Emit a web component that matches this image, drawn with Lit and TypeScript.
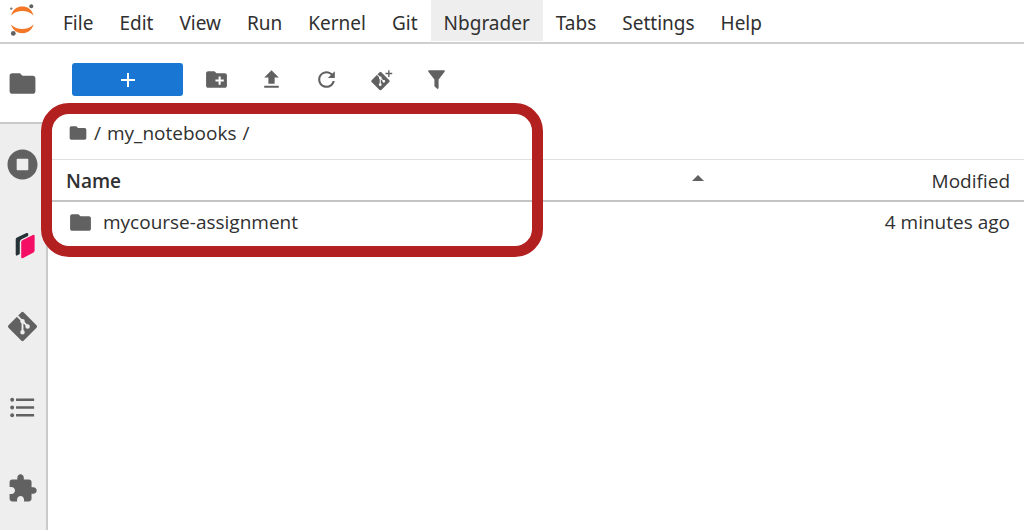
import { LitElement, html, svg, css } from "lit";
import { customElement, property } from "lit/decorators.js";

const FOLDER = svg`<path d="M10 4H4c-1.1 0-1.99.9-1.99 2L2 18c0 1.1.9 2 2 2h16c1.1 0 2-.9 2-2V8c0-1.1-.9-2-2-2h-8l-2-2z"/>`;

const ICONS: Record<string, { box: string; art: unknown }> = {
  folder: { box: "0 0 24 24", art: FOLDER },
  newFolder: {
    box: "0 0 24 24",
    art: svg`<path d="M20 6h-8l-2-2H4c-1.11 0-1.99.89-1.99 2L2 18c0 1.11.89 2 2 2h16c1.11 0 2-.89 2-2V8c0-1.11-.89-2-2-2zm-1 8h-3v3h-2v-3h-3v-2h3V9h2v3h3v2z"/>`,
  },
  add: { box: "0 0 24 24", art: svg`<path d="M19 13h-6v6h-2v-6H5v-2h6V5h2v6h6v2z"/>` },
  upload: { box: "0 0 24 24", art: svg`<path d="M5 20h14v-2H5v2zm0-3zM9 16h6v-6h4l-7-7-7 7h4z"/>` },
  refresh: {
    box: "0 0 18 18",
    art: svg`<path d="M9 13.5c-2.49 0-4.5-2.01-4.5-4.5S6.51 4.5 9 4.5c1.24 0 2.36.52 3.17 1.33L10 8h5V3l-1.76 1.76C12.15 3.68 10.66 3 9 3 5.69 3 3.01 5.69 3.01 9S5.69 15 9 15c2.97 0 5.43-2.16 5.9-5h-1.52c-.46 2-2.24 3.5-4.38 3.5z"/>`,
  },
  gitClone: {
    box: "0 0 24 24",
    art: svg`<rect x="4.4" y="6.9" width="13.2" height="13.2" rx="1.2" transform="rotate(45 11 13.5)"/>
      <g stroke="#fff" stroke-width="1" fill="#fff"><path fill="none" d="M7.8 7.2l3 3v7M10.8 10.5l3.4 3.2"/>
      <circle cx="10.8" cy="10.4" r="0.8"/><circle cx="10.8" cy="17" r="0.8"/><circle cx="14.2" cy="13.7" r="0.8"/></g>
      <path d="M18.4 3h1.3v2.6h2.6v1.3h-2.6v2.6h-1.3V6.9h-2.6V5.6h2.6z"/>`,
  },
  filter: {
    box: "0 0 24 24",
    art: svg`<path d="M14,12V19.88C14.04,20.18 13.94,20.5 13.71,20.71C13.32,21.1 12.69,21.1 12.3,20.71L10.29,18.7C10.06,18.47 9.96,18.16 10,17.87V12H9.97L4.21,4.62C3.87,4.19 3.95,3.56 4.38,3.22C4.57,3.08 4.78,3 5,3V3H19V3C19.22,3 19.43,3.08 19.62,3.22C20.05,3.56 20.13,4.19 19.79,4.62L14.03,12H14Z"/>`,
  },
  running: {
    box: "0 0 512 512",
    art: svg`<path d="M256 8C119 8 8 119 8 256s111 248 248 248 248-111 248-248S393 8 256 8zm96 328c0 8.8-7.2 16-16 16H176c-8.8 0-16-7.2-16-16V176c0-8.8 7.2-16 16-16h160c8.8 0 16 7.2 16 16v160z"/>`,
  },
  grader: {
    box: "0 0 31 31",
    art: svg`<path fill="#263238" d="M8.7 9.6Q8.7 8.3 10 7.6L19.5 3Q21.2 2.5 21.2 4V6L14.5 9.2Q12.8 10.2 12.8 12V24L10 25.6Q8.7 25.8 8.7 24.5z"/>
      <path fill="#f50f64" d="M14.2 12.2Q14.2 10.9 15.4 10.2L25.8 5Q27.6 4.4 27.6 6V20.6Q27.6 21.8 26.5 22.4L16.2 28Q14.2 28.9 14.2 27z"/>`,
  },
  git: {
    box: "0 0 31 31",
    art: svg`<rect x="4.7" y="4.7" width="21.6" height="21.6" rx="1.8" transform="rotate(45 15.5 15.5)"/>
      <g stroke="#eee" stroke-width="1.9" fill="#eee"><path fill="none" d="M10.2 4.8l5.3 5.4v11M15.5 10.2l5 5"/>
      <circle cx="15.5" cy="10.3" r="1.3"/><circle cx="15.5" cy="21.2" r="1.3"/><circle cx="20.6" cy="15.4" r="1.3"/></g>`,
  },
  toc: {
    box: "0 0 24 24",
    art: svg`<path d="M7 5h14v2H7zM7 11h14v2H7zM7 17h14v2H7z"/><circle cx="4" cy="6" r="1.5"/><circle cx="4" cy="12" r="1.5"/><circle cx="4" cy="18" r="1.5"/>`,
  },
  extension: {
    box: "0 0 24 24",
    art: svg`<path d="M20.5 11H19V7c0-1.1-.9-2-2-2h-4V3.5C13 2.12 11.88 1 10.5 1S8 2.12 8 3.5V5H4c-1.1 0-1.99.9-1.99 2v3.8H3.5c1.49 0 2.7 1.21 2.7 2.7s-1.21 2.7-2.7 2.7H2V20c0 1.1.9 2 2 2h3.8v-1.5c0-1.49 1.21-2.7 2.7-2.7 1.49 0 2.7 1.21 2.7 2.7V22H17c1.1 0 2-.9 2-2v-4h1.5c1.38 0 2.5-1.12 2.5-2.5S21.88 11 20.5 11z"/>`,
  },
  caretUp: { box: "0 0 14 7", art: svg`<path d="M0 7L7 0l7 7z"/>` },
  jupyter: {
    box: "0 0 28 34",
    art: svg`<path fill="#f37726" d="M3 12.5C5 6 9.5 3.6 14.3 3.6S23.6 6 25.6 12.5C22.5 9.4 18.5 8 14.3 8S6 9.4 3 12.5z"/>
      <path fill="#f37726" d="M3 21.5C5 27.8 9.5 30.2 14.3 30.2S23.6 27.8 25.6 21.5C22.5 24.6 18.5 26 14.3 26S6 24.6 3 21.5z"/>
      <circle fill="#616161" cx="23.3" cy="3.2" r="2"/><circle fill="#757575" cx="3.3" cy="5.6" r="1.2"/><circle fill="#616161" cx="5.3" cy="30.4" r="2.4"/>`,
  },
};

@customElement("jp-icon")
class JpIcon extends LitElement {
  @property() name = "folder";
  static styles = css`
    :host { display: block; flex: none; color: #616161; }
    .art { display: block; width: 100%; height: 100%; fill: currentColor; }
  `;
  render() {
    const icon = ICONS[this.name];
    return html`<svg class="art" viewBox=${icon.box} aria-hidden="true">${icon.art}</svg>`;
  }
}

const MENUS = ["File", "Edit", "View", "Run", "Kernel", "Git", "Nbgrader", "Tabs", "Settings", "Help"];

const PANELS = [
  { icon: "folder", label: "File Browser" },
  { icon: "running", label: "Running Terminals and Kernels" },
  { icon: "grader", label: "Assignments" },
  { icon: "git", label: "Git" },
  { icon: "toc", label: "Table of Contents" },
  { icon: "extension", label: "Extension Manager" },
];

const TOOLS = [
  { icon: "newFolder", label: "New Folder" },
  { icon: "upload", label: "Upload Files" },
  { icon: "refresh", label: "Refresh the file browser" },
  { icon: "gitClone", label: "Git Clone" },
  { icon: "filter", label: "Toggle File Filter" },
];

const FILES = [{ name: "mycourse-assignment", modified: "4 minutes ago" }];

@customElement("app-root")
class AppRoot extends LitElement {
  static styles = css`
    :host {
      display: flex;
      flex-direction: column;
      position: relative;
      min-height: 100vh;
      background: #fff;
      color: #303030;
      font: 19px/26px "Open Sans", "Noto Sans", sans-serif;
    }
    * { box-sizing: border-box; }
    button { border: 0; padding: 0; margin: 0; background: none; color: inherit; font: inherit; cursor: pointer; }
    a { color: inherit; text-decoration: none; }
    .menubar { display: flex; height: 44px; padding-left: 8px; border-bottom: 2px solid #cfcfcf; font-family: "Noto Sans", "Open Sans", sans-serif; }
    .logo { width: 28px; height: 34px; margin: 3px 14px 0 0; }
    .menus { display: flex; height: 41px; }
    .menu { padding: 4px 13px 0; }
    .menu.active { background: #eee; }
    .body { display: flex; flex: 1; }
    .rail { display: flex; flex-direction: column; width: 48px; background: #eee; border-right: 2px solid #cacaca; }
    .tab { display: grid; place-items: center; height: 81px; padding-right: 2px; }
    .tab.current { height: 80px; background: #fff; border-bottom: 2px solid #cacaca; margin-right: -2px; padding-right: 4px; }
    .rail-icon { width: 31px; height: 31px; }
    .browser { flex: 1; min-width: 0; }
    .toolbar { display: flex; align-items: center; gap: 30px; padding: 19px 24px 0; }
    .launch { display: grid; place-items: center; width: 111px; height: 33px; margin-right: -9px; border-radius: 3px; background: #1976d2; }
    .launch-icon { width: 24px; height: 24px; color: #fff; }
    .tool-icon { width: 25px; height: 25px; }
    .crumbs { display: flex; align-items: center; gap: 6px; height: 63px; padding: 10px 20px 0; }
    .crumb-icon { width: 20px; height: 20px; }
    .files { width: 100%; border-collapse: collapse; table-layout: fixed; }
    .name-col { width: 68%; }
    .head { height: 41px; padding: 2px 14px 0 18px; border-top: 1px solid #e0e0e0; border-bottom: 2px solid #c4c4c4; font-weight: 400; }
    .sort { display: flex; align-items: center; justify-content: space-between; width: 100%; font-weight: 600; }
    .caret { width: 14px; height: 6px; margin: 0 -7px 6px 0; }
    .cell { height: 42px; padding: 0 14px 0 20px; }
    .entry { display: flex; align-items: center; gap: 10px; }
    .entry-icon { width: 25px; height: 25px; }
    .right { text-align: right; }
    .callout {
      position: absolute;
      left: 41px;
      top: 103px;
      width: 502px;
      height: 154px;
      border: 11px solid #b32020;
      border-radius: 28px;
      pointer-events: none;
    }
  `;

  render() {
    return html`
      <header class="menubar">
        <jp-icon class="logo" name="jupyter"></jp-icon>
        <nav class="menus" aria-label="Main menu">
          ${MENUS.map((m) => html`<button class="menu ${m === "Nbgrader" ? "active" : ""}">${m}</button>`)}
        </nav>
      </header>
      <div class="body">
        <nav class="rail" aria-label="Side panels">
          ${PANELS.map(
            (p, i) => html`<button class="tab ${i === 0 ? "current" : ""}" aria-label=${p.label}>
              <jp-icon class="rail-icon" name=${p.icon}></jp-icon>
            </button>`
          )}
        </nav>
        <main class="browser">
          <div class="toolbar">
            <button class="launch" aria-label="New Launcher"><jp-icon class="launch-icon" name="add"></jp-icon></button>
            ${TOOLS.map(
              (t) => html`<button aria-label=${t.label}><jp-icon class="tool-icon" name=${t.icon}></jp-icon></button>`
            )}
          </div>
          <nav class="crumbs" aria-label="Path">
            <a href="#root" aria-label="Root folder"><jp-icon class="crumb-icon" name="folder"></jp-icon></a>
            <span>/</span><a href="#my_notebooks">my_notebooks</a><span>/</span>
          </nav>
          <table class="files">
            <thead>
              <tr>
                <th class="head name-col" aria-sort="ascending">
                  <button class="sort">Name <jp-icon class="caret" name="caretUp"></jp-icon></button>
                </th>
                <th class="head right"><button>Modified</button></th>
              </tr>
            </thead>
            <tbody>
              ${FILES.map(
                (f) => html`<tr>
                  <td class="cell">
                    <a class="entry" href="#${f.name}"><jp-icon class="entry-icon" name="folder"></jp-icon>${f.name}</a>
                  </td>
                  <td class="cell right">${f.modified}</td>
                </tr>`
              )}
            </tbody>
          </table>
        </main>
      </div>
      <div class="callout" aria-hidden="true"></div>
    `;
  }
}
